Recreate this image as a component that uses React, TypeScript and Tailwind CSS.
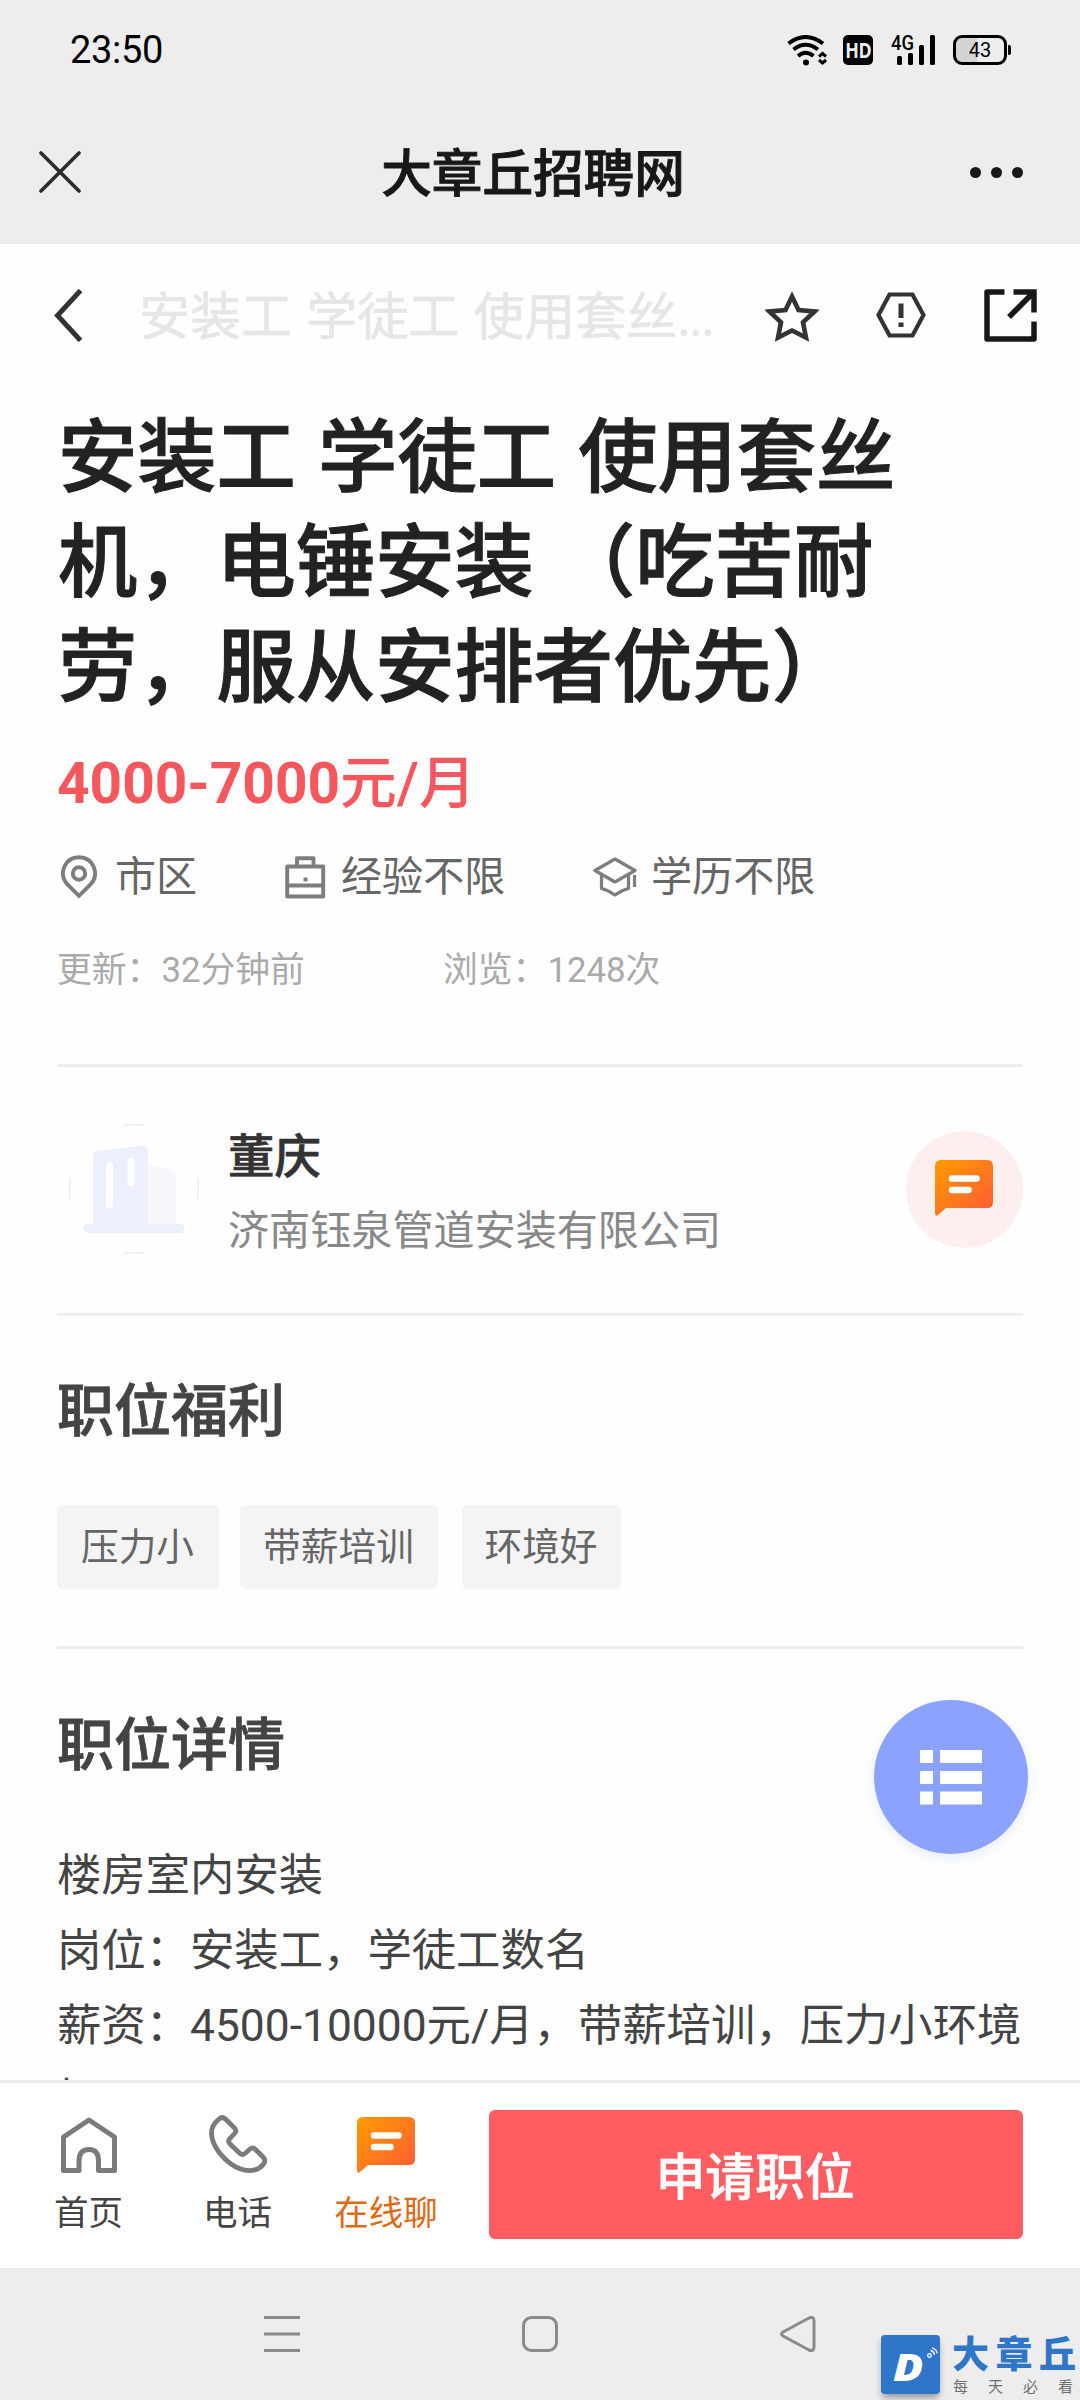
import React from "react";

const TAGS = [
  { label: "压力小", box: "w-[162px] mr-[21px]" },
  { label: "带薪培训", box: "w-[198px] mr-6" },
  { label: "环境好", box: "w-[159px]" },
];

function StatusBar() {
  return (
    <div className="flex h-[100px] items-center pl-[70px] pr-[69px] text-black">
      <span className="w-[96px] text-[38px] leading-none tracking-[-0.3px]">23:50</span>
      <svg className="ml-auto" width="42" height="31" viewBox="0 0 42 31" fill="none" stroke="#000" strokeWidth="4">
        <path d="M1.500 8.500Q18.500 -4.500 36 8.500" />
        <path d="M6.500 14.500Q18.500 5 31 14.500" />
        <path d="M11 21Q18.500 14.500 26.500 21" />
        <circle cx="19" cy="27.500" r="3" fill="#000" stroke="none" />
        <path d="M32 21.500L35.500 18.500L39 21.500M32 25L35.500 28L39 25" strokeWidth="3" />
      </svg>
      <div className="ml-[14px] flex h-[30px] w-[30px] items-center justify-center rounded-[5px] bg-black">
        <span className="scale-x-[0.850] font-['Open_Sans'] text-[21px] font-bold leading-none tracking-[-0.5px] text-[#ededed]">HD</span>
      </div>
      <div className="relative ml-[18px] h-[30px] w-[44px]">
        <span className="absolute left-0 top-[-1px] origin-left scale-x-[0.920] text-[20px] font-medium leading-[18px]">4G</span>
        <div className="flex h-full items-end justify-end gap-[6px]">
          <i className="h-[9px] w-[5px] rounded-[1.500px] bg-black" />
          <i className="h-3 w-[5px] rounded-[1.500px] bg-black" />
          <i className="h-5 w-[5px] rounded-[1.500px] bg-black" />
          <i className="h-[30px] w-[5px] rounded-[1.500px] bg-black" />
        </div>
      </div>
      <div className="ml-[18px] flex h-[30px] w-[54px] items-center justify-center rounded-[9px] border-[3px] border-black bg-[linear-gradient(90deg,#d4d4d4_44%,#ededed_44%)]">
        <span className="text-[20px] leading-none">43</span>
      </div>
      <i className="ml-px h-[10px] w-[3px] rounded-r-[2px] bg-black" />
    </div>
  );
}

function TitleBar() {
  return (
    <div className="flex h-[144px] items-center justify-between pl-[39px] pr-[57px]">
      <svg width="42" height="42" viewBox="0 0 42 42" stroke="#2b2b2b" strokeWidth="3.600" strokeLinecap="round">
        <path d="M2 2L40 40M40 2L2 40" />
      </svg>
      <h1 className="ml-[15px] mt-[7px] text-[50.600px] font-medium leading-none text-[#181818] [-webkit-text-stroke:0.900px_#181818]">大章丘招聘网</h1>
      <div className="flex gap-[10px]">
        <i className="size-[11px] rounded-full bg-[#181818]" />
        <i className="size-[11px] rounded-full bg-[#181818]" />
        <i className="size-[11px] rounded-full bg-[#181818]" />
      </div>
    </div>
  );
}

function NavRow() {
  return (
    <div className="flex h-[144px] items-center pb-[2px] pl-[54px]">
      <svg width="29" height="53" viewBox="0 0 29 53" fill="none" stroke="#333" strokeWidth="5">
        <path d="M26.500 1.500L3.500 26.500L26.500 51.500" />
      </svg>
      <span className="ml-[56px] mt-1 w-[626px] whitespace-nowrap text-[51px] leading-none text-[#e6e6e6] [-webkit-text-stroke:0.700px_#e6e6e6] [word-spacing:1.500px]">
        安装工 学徒工 使用套丝<span className="tracking-[-1.500px]">...</span>
      </span>
      <svg width="54" height="51" viewBox="0 0 54 51" fill="none" stroke="#333" strokeWidth="4.600" className="mt-[2px]">
        <path d="M27 5.500L33.500 19L49.500 20.500L38 31.200L41 46.500L27 39.500L13 46.500L16 31.200L4.500 20.500L20.500 19Z" />
      </svg>
      <svg width="50" height="46" viewBox="0 0 50 46" className="ml-[57px]" fill="none" stroke="#333" strokeWidth="4.200">
        <path d="M13.500 2.500H36.500L47.500 23L36.500 43.500H13.500L2.500 23Z" />
        <path d="M25 11.500V26M25 30.500V35" strokeWidth="5" />
      </svg>
      <svg width="53" height="53" viewBox="0 0 53 53" className="ml-[58px]" fill="none" stroke="#181818" strokeWidth="5.500">
        <path d="M20.500 3H3V50H50V32.500" strokeLinejoin="round" />
        <path d="M29.500 3H50V23.500M49 4L25 28" />
      </svg>
    </div>
  );
}

function PinIcon() {
  return (
    <svg width="38" height="44" viewBox="0 0 38 44" fill="none" stroke="#7d7d7d" strokeWidth="3.900">
      <path d="M19 40.800L7.500 29.500C-2 19 4.500 2.200 19 2.200S40 19 30.500 29.500Z" />
      <circle cx="19" cy="18.500" r="6.200" />
    </svg>
  );
}

function CaseIcon() {
  return (
    <svg width="41" height="43" viewBox="0 0 41 43" fill="none" stroke="#7d7d7d" strokeWidth="3.900" strokeLinejoin="round">
      <rect x="2.200" y="10.500" width="36" height="30" />
      <path d="M12 10V2.300H28.500V10M2 29.500H39" />
      <path d="M18.500 23.500H22.500" />
    </svg>
  );
}

function CapIcon() {
  return (
    <svg width="44" height="40" viewBox="0 0 44 40" fill="none" stroke="#7d7d7d" strokeWidth="3.200" strokeLinejoin="round">
      <path d="M22 2L42 13.500L22 25L2 13.500Z" />
      <path d="M8.500 18V31.500Q15 33 22 38Q29 33 35.500 31.500V18M41.500 18V30" />
    </svg>
  );
}

function ChatIcon({ id }: { id: string }) {
  return (
    <svg width="58" height="56" viewBox="0 0 58 56">
      <defs>
        <linearGradient id={id} x1="0" y1="0" x2="1" y2="1">
          <stop offset="0" stopColor="#ff9c00" />
          <stop offset="1" stopColor="#ff5a36" />
        </linearGradient>
      </defs>
      <path d="M6 0H52Q58 0 58 6V42Q58 48 52 48H11L3 55Q0 57 0 53V6Q0 0 6 0Z" fill={`url(#${id})`} />
      <path d="M17 18.500H41.500M17 30H33.500" stroke="#fff" strokeWidth="6.500" strokeLinecap="round" />
    </svg>
  );
}

function Company() {
  return (
    <section className="flex h-[249px] items-center border-t-[3px] border-[#ededef]">
      <svg width="130" height="130" viewBox="0 0 130 130" className="mb-[3px] ml-[12px]">
        <path d="M54 1.200Q65 .2 76 1.200M54 128.800Q65 129.800 76 128.800M1.200 54Q.2 65 1.200 76M128.800 54Q129.800 65 128.800 76" fill="none" stroke="#e4e4e4" strokeWidth="1" />
        <path d="M77 41L101 45Q107 46 107 52V101H77Z" fill="#f8f8fc" />
        <path d="M24 101V33Q24 28 29 27L72 22Q79 21 79 28V101Z" fill="#eceffc" />
        <path d="M40.500 41V81M62 37V59" stroke="#fff" strokeWidth="7" strokeLinecap="round" />
        <rect x="14.500" y="100" width="101" height="9" rx="4.500" fill="#eceffc" />
      </svg>
      <div className="ml-[29px] mt-[7px] flex flex-col">
        <span className="text-[46.500px] font-medium leading-[74px] text-[#333] [-webkit-text-stroke:0.700px_#333]">董庆</span>
        <span className="text-[41.100px] leading-[74px] text-[#888]">济南钰泉管道安装有限公司</span>
      </div>
      <div className="mb-[2px] ml-auto flex size-[117px] items-center justify-center rounded-full bg-[#fdefee] pb-[2px] pr-px">
        <ChatIcon id="chat-company" />
      </div>
    </section>
  );
}

function BottomBar() {
  return (
    <div className="flex h-[188px] border-t-[3px] border-[#ececf0] bg-white pl-[54px] pt-[27px] text-[34.500px] leading-[52px] text-[#444]">
      <div className="flex w-[69px] flex-col items-center pt-[7px]">
        <svg width="56" height="56" viewBox="0 0 56 56" fill="none" stroke="#7b7b7b" strokeWidth="5" strokeLinejoin="round">
          <path d="M2.500 20L28 3L53.500 20V53.500H37.500V44Q37.500 32.500 28 32.500Q18 32.500 18 44V53.500H2.500Z" />
        </svg>
        <span className="mt-[14px]">首页</span>
      </div>
      <div className="ml-[80px] flex w-[69px] flex-col items-center pt-[5px]">
        <svg width="58" height="58" viewBox="0 0 58 58" fill="none" stroke="#7b7b7b" strokeWidth="4.800" strokeLinejoin="round">
          <path d="M10 4Q13.500 1 17 4.500L25.500 13Q28 15.500 26 18L20.500 24Q18.500 26.500 21 29L31 38.500Q33.500 40.500 36 38.500L41 34Q43.500 32 46 34L54 42Q57.500 45.500 54.500 49C48 58 34 57.500 22 49C10 40 2.500 28 2.500 18C2.500 12 5 8 10 4Z" />
        </svg>
        <span className="mt-[14px]">电话</span>
      </div>
      <div className="ml-[61px] flex w-[106px] flex-col items-center pt-[7px] text-[#e06a14]">
        <ChatIcon id="chat-bar" />
        <span className="mt-[14px] whitespace-nowrap">在线聊</span>
      </div>
      <button className="ml-[50px] flex h-[129px] w-[534px] items-center justify-center rounded-[6px] bg-[#ff5d61] pr-[2px] pt-[6px] text-[49.700px] font-medium text-white [-webkit-text-stroke:0.700px_#fff]">
        申请职位
      </button>
    </div>
  );
}

function SystemNav() {
  return (
    <div className="relative flex h-[132px] bg-[#ededed] pl-[264px] pt-12">
      <svg width="36" height="36" viewBox="0 0 36 36" stroke="#8a8a8a" strokeWidth="3">
        <path d="M0 1.500H36M0 18H36M0 34.500H36" />
      </svg>
      <svg width="36" height="36" viewBox="0 0 36 36" fill="none" stroke="#8a8a8a" strokeWidth="3" className="ml-[222px]">
        <rect x="1.500" y="1.500" width="33" height="33" rx="8" />
      </svg>
      <svg width="36" height="36" viewBox="0 0 36 36" fill="none" stroke="#8a8a8a" strokeWidth="3" strokeLinejoin="round" className="ml-[222px]">
        <path d="M3 16Q0 18 3 20L29 34Q34 36 34 31V5Q34 0 29 2Z" />
      </svg>
      <div className="absolute bottom-0 right-0 flex h-[66px] w-[204px] items-start pl-[5px] pt-px">
        <div className="relative size-[59px] shrink-0 rounded-[4px] bg-[#2f75c8] shadow-[0_5px_7px_-1px_rgba(0,0,0,0.35)]">
          <span className="absolute left-[12px] top-[10px] origin-left scale-x-[1.200] font-['Open_Sans'] text-[37px] font-extrabold italic leading-[43px] text-white">D</span>
          <svg width="12" height="12" viewBox="0 0 12 12" className="absolute right-[2px] top-3" fill="none" stroke="#fff" strokeWidth="1.300">
            <circle cx="3.500" cy="8.500" r="1.800" />
            <path d="M4.500 3.500Q8 4 8.500 8M6 .8Q10.500 2 11.300 6.500" />
          </svg>
        </div>
        <div className="ml-[12px] flex flex-col whitespace-nowrap">
          <div className="flex gap-[6.500px] pt-px text-[37px] font-black leading-[40px] text-[#2f75c8]">
            {["大", "章", "丘"].map((c) => (
              <span key={c}>{c}</span>
            ))}
          </div>
          <div className="ml-px mt-[2px] flex gap-5 text-[15px] leading-[18px] text-[#707070]">
            {["每", "天", "必", "看"].map((c) => (
              <span key={c}>{c}</span>
            ))}
          </div>
        </div>
      </div>
    </div>
  );
}

export default function App() {
  return (
    <div className="relative flex h-[2400px] w-[1080px] flex-col overflow-hidden bg-[#fefefe] font-[Roboto,'Noto_Sans_CJK_SC',sans-serif]" lang="zh-CN">
      <header className="h-[244px] bg-[#ededed]">
        <StatusBar />
        <TitleBar />
      </header>
      <main className="h-[1836px] overflow-hidden">
        <NavRow />
        <div className="pl-[57px] pr-[57px]">
          <h2 className="ml-px mt-[17px] whitespace-pre text-[79.300px] font-medium leading-[105px] text-[#222] [-webkit-text-stroke:1px_#222] [word-spacing:2.500px]">{"安装工 学徒工 使用套丝\n机，电锤安装 （吃苦耐\n劳，服从安排者优先）"}</h2>
          <div className="flex h-[126px] items-center pt-[2px] text-[56.800px] font-bold text-[#f5575c]">
            <span>4000-7000<span className="font-medium">元/月</span></span>
          </div>
          <div className="flex h-[62px] items-center pl-[3px] text-[41.100px] leading-[62px] text-[#666]">
            <PinIcon />
            <span className="ml-[17px] w-[170px]">市区</span>
            <CaseIcon />
            <span className="ml-[15px] w-[252px]">经验不限</span>
            <CapIcon />
            <span className="ml-[14px]">学历不限</span>
          </div>
          <div className="mb-[34px] flex h-[122px] items-center pt-[2px] text-[34.800px] text-[#aaa]">
            <span className="w-[386px]">更新：32分钟前</span>
            <span>浏览：1248次</span>
          </div>
          <Company />
          <section className="h-[333px] border-t-[3px] border-[#ededef] pt-[60px]">
            <h3 className="text-[57px] font-medium leading-[72px] text-[#444] [-webkit-text-stroke:0.800px_#444]">职位福利</h3>
            <div className="mt-[57px] flex text-[37.700px] text-[#666]">
              {TAGS.map((t) => (
                <span key={t.label} className={`${t.box} flex h-[84px] items-center justify-center rounded-[6px] bg-[#f4f4f4] pr-px`}>{t.label}</span>
              ))}
            </div>
          </section>
          <section className="border-t-[3px] border-[#ededef] pt-[61px]">
            <h3 className="text-[57px] font-medium leading-[72px] text-[#444] [-webkit-text-stroke:0.800px_#444]">职位详情</h3>
            <p className="mt-[57px] whitespace-pre text-[44.350px] leading-[74.800px] text-[#444]">{"楼房室内安装\n岗位：安装工，学徒工数名\n薪资：4500-10000元/月，带薪培训，压力小环境\n好"}</p>
          </section>
        </div>
      </main>
      <BottomBar />
      <SystemNav />
      <div className="absolute left-[874px] top-[1700px] flex size-[154px] items-center justify-center rounded-full bg-[#8ba3ff] shadow-[0_4px_12px_rgba(139,163,255,0.2)]">
        <svg width="62" height="55" viewBox="0 0 62 55" fill="#fff">
          <path d="M0 0H13V13H0ZM20 0H62V13H20ZM0 21H13V34H0ZM20 21H62V34H20ZM0 41.500H13V54.500H0ZM20 41.500H62V54.500H20Z" />
        </svg>
      </div>
    </div>
  );
}
